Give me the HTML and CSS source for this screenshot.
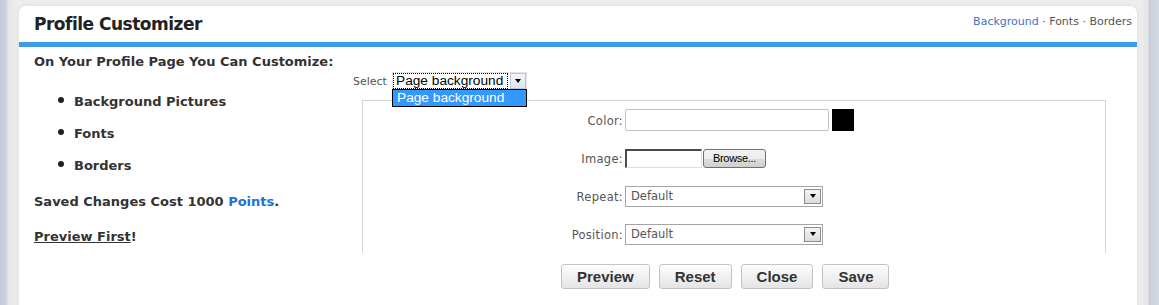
FILE: index.html
```html
<!DOCTYPE html>
<html>
<head>
<meta charset="utf-8">
<link rel="stylesheet" href="styles.css">
</head>
<body>
<div class="panel">
  <div class="header">
    <div class="title">Profile Customizer</div>
    <div class="nav"><span class="nav-active">Background</span> · Fonts · Borders</div>
  </div>
  <div class="content">
    <div class="left">
      <div class="intro">On Your Profile Page You Can Customize:</div>
      <ul class="features">
        <li>Background Pictures</li>
        <li>Fonts</li>
        <li>Borders</li>
      </ul>
      <div class="cost">Saved Changes Cost 1000 <span class="points">Points</span>.</div>
      <div class="preview-first"><span class="ul">Preview First</span>!</div>
    </div>
    <div class="right">
      <div class="select-row">
        <span class="select-label">Select</span>
        <div class="page-select">
          <span class="page-select-text">Page background</span>
          <span class="page-select-btn"><span class="tri"></span></span>
          <div class="dropdown">Page background</div>
        </div>
      </div>
      <div class="box">
        <div class="form">
          <div class="lbl">Color:</div>
          <div class="field"><div class="text-input"></div><div class="swatch"></div></div>
          <div class="lbl">Image:</div>
          <div class="field"><div class="file-input"></div><div class="browse">Browse...</div></div>
          <div class="lbl">Repeat:</div>
          <div class="field"><div class="sel"><span>Default</span><span class="sel-btn"><span class="tri"></span></span></div></div>
          <div class="lbl">Position:</div>
          <div class="field"><div class="sel"><span>Default</span><span class="sel-btn"><span class="tri"></span></span></div></div>
        </div>
      </div>
      <div class="buttons">
        <div class="btn">Preview</div>
        <div class="btn">Reset</div>
        <div class="btn">Close</div>
        <div class="btn">Save</div>
      </div>
    </div>
  </div>
</div>
</body>
</html>
```
FILE: styles.css
```css
html, body {
  margin: 0;
  padding: 0;
  height: 305px;
  overflow: hidden;
}
body {
  background: linear-gradient(to right, #c4c9d5 0, #ccd0da 6px, #e6e6e6 8px, #ededed 18px, #ededed 1140px, #e6e6e6 1148px, #c9ced9 1149px, #d6dae3 1159px);
  font-family: "DejaVu Sans", Verdana, sans-serif;
  color: #333;
  padding-top: 6px;
}
.panel {
  margin-left: 19px;
  width: 1118px;
  height: 320px;
  background: #fff;
  border-radius: 7px 7px 0 0;
  box-shadow: 0 0 4px rgba(0,0,0,0.08);
}
.header {
  height: 36px;
  display: flex;
  justify-content: space-between;
  align-items: flex-start;
  padding: 0 5px 0 15px;
  border-bottom: 5px solid #3e9be9;
}
.title {
  font-size: 17px;
  letter-spacing: -0.5px;
  font-weight: bold;
  line-height: 21px;
  padding-top: 8px;
  color: #222;
}
.nav {
  font-size: 11px;
  line-height: 13px;
  padding-top: 9px;
  color: #555;
}
.nav-active { color: #4470c0; }
.content {
  display: flex;
}
.left {
  width: 319px;
  padding-left: 15px;
  font-size: 13px;
  font-weight: bold;
  line-height: 16px;
}
.intro { margin-top: 7px; }
.features {
  margin: 24px 0 0 0;
  padding: 0 0 0 40px;
  list-style: none;
}
.features li {
  position: relative;
  margin-bottom: 16px;
}
.features li::before {
  content: "";
  position: absolute;
  left: -16px;
  top: 3px;
  width: 6px;
  height: 6px;
  border-radius: 50%;
  background: #222;
}
.cost { margin-top: 20px; }
.points { color: #1a73d6; }
.preview-first { margin-top: 19px; }
.ul { text-decoration: underline; }

.right {
  flex: 1;
}
.select-row {
  display: flex;
  align-items: center;
  margin-top: 25px;
  height: 18px;
}
.select-label {
  font-size: 11px;
  color: #555;
  width: 39px;
}
.page-select {
  position: relative;
  width: 135px;
  height: 18px;
  box-sizing: border-box;
  border: 1px solid #e3e3e3;
  display: flex;
  align-items: center;
  background: #fff;
}
.page-select-text {
  font-family: "Liberation Sans", Arial, sans-serif;
  font-size: 13.7px;
  color: #000;
  height: 14px;
  line-height: 14px;
  padding: 0 3px 0 2px;
  border: 1px dotted #000;
  width: 112px;
  white-space: nowrap;
}
.page-select-btn {
  margin-left: 2px;
  width: 14px;
  height: 14px;
  border: 1px solid #b7c7dd;
  background: linear-gradient(#f4f6fa, #dde4ef);
  display: flex;
  align-items: center;
  justify-content: center;
}
.tri {
  width: 0;
  height: 0;
  border-left: 3.5px solid transparent;
  border-right: 3.5px solid transparent;
  border-top: 4px solid #000;
}
.dropdown {
  position: absolute;
  left: -1px;
  top: 16px;
  width: 129px;
  height: 16px;
  border: 1px solid #000;
  background: #3399ff;
  color: #fff;
  font-family: "Liberation Sans", Arial, sans-serif;
  font-size: 13.7px;
  line-height: 16px;
  padding-left: 4px;
  z-index: 2;
  box-sizing: content-box;
  white-space: nowrap;
}
.box {
  margin: 10px 0 0 9px;
  width: 742px;
  height: 152px;
  border: 1px solid #d5d5d5;
  border-bottom: none;
}
.form {
  display: grid;
  grid-template-columns: 260px auto;
  grid-auto-rows: 38px;
  column-gap: 2px;
  align-items: center;
}
.lbl {
  text-align: right;
  font-size: 11.5px;
  letter-spacing: 0.3px;
  color: #555;
  padding-top: 1px;
}
.field {
  display: flex;
  align-items: center;
}
.text-input {
  width: 204px;
  height: 22px;
  box-sizing: border-box;
  border: 1px solid #c4c4c4;
  border-radius: 2px;
  background: #fff;
}
.swatch {
  margin-left: 3px;
  width: 22px;
  height: 22px;
  background: #000;
}
.file-input {
  width: 77px;
  height: 19px;
  box-sizing: border-box;
  border-style: solid;
  border-width: 2px 1px 1px 2px;
  border-color: #4a4a4a #dcdcdc #dcdcdc #4a4a4a;
}
.browse {
  margin-left: 1px;
  width: 63px;
  height: 19px;
  box-sizing: border-box;
  border: 1px solid #707070;
  border-radius: 3px;
  background: linear-gradient(#f3f3f3 0, #ebebeb 50%, #dddddd 51%, #d0d0d0 100%);
  font-family: "Liberation Sans", Arial, sans-serif;
  font-size: 11px;
  letter-spacing: -0.3px;
  color: #000;
  text-align: center;
  line-height: 17px;
}
.sel {
  width: 198px;
  height: 21px;
  box-sizing: border-box;
  border: 1px solid #a5a5a5;
  display: flex;
  align-items: center;
  justify-content: space-between;
  font-size: 11.5px;
  color: #555;
  padding-left: 5px;
}
.sel-btn {
  width: 15px;
  height: 13px;
  margin-right: 1px;
  border: 1px solid #8c8c8c;
  background: linear-gradient(#f5f5f5, #dcdcdc);
  display: flex;
  align-items: center;
  justify-content: center;
}
.buttons {
  display: flex;
  gap: 9px;
  margin: 11px 0 0 208px;
}
.btn {
  height: 25px;
  box-sizing: border-box;
  padding: 0 15px;
  border: 1px solid #c3c3c3;
  border-radius: 3px;
  background: linear-gradient(#fdfdfd, #e4e4e4);
  font-family: "Liberation Sans", Arial, sans-serif;
  font-size: 15px;
  font-weight: bold;
  color: #333;
  line-height: 23px;
}
```
